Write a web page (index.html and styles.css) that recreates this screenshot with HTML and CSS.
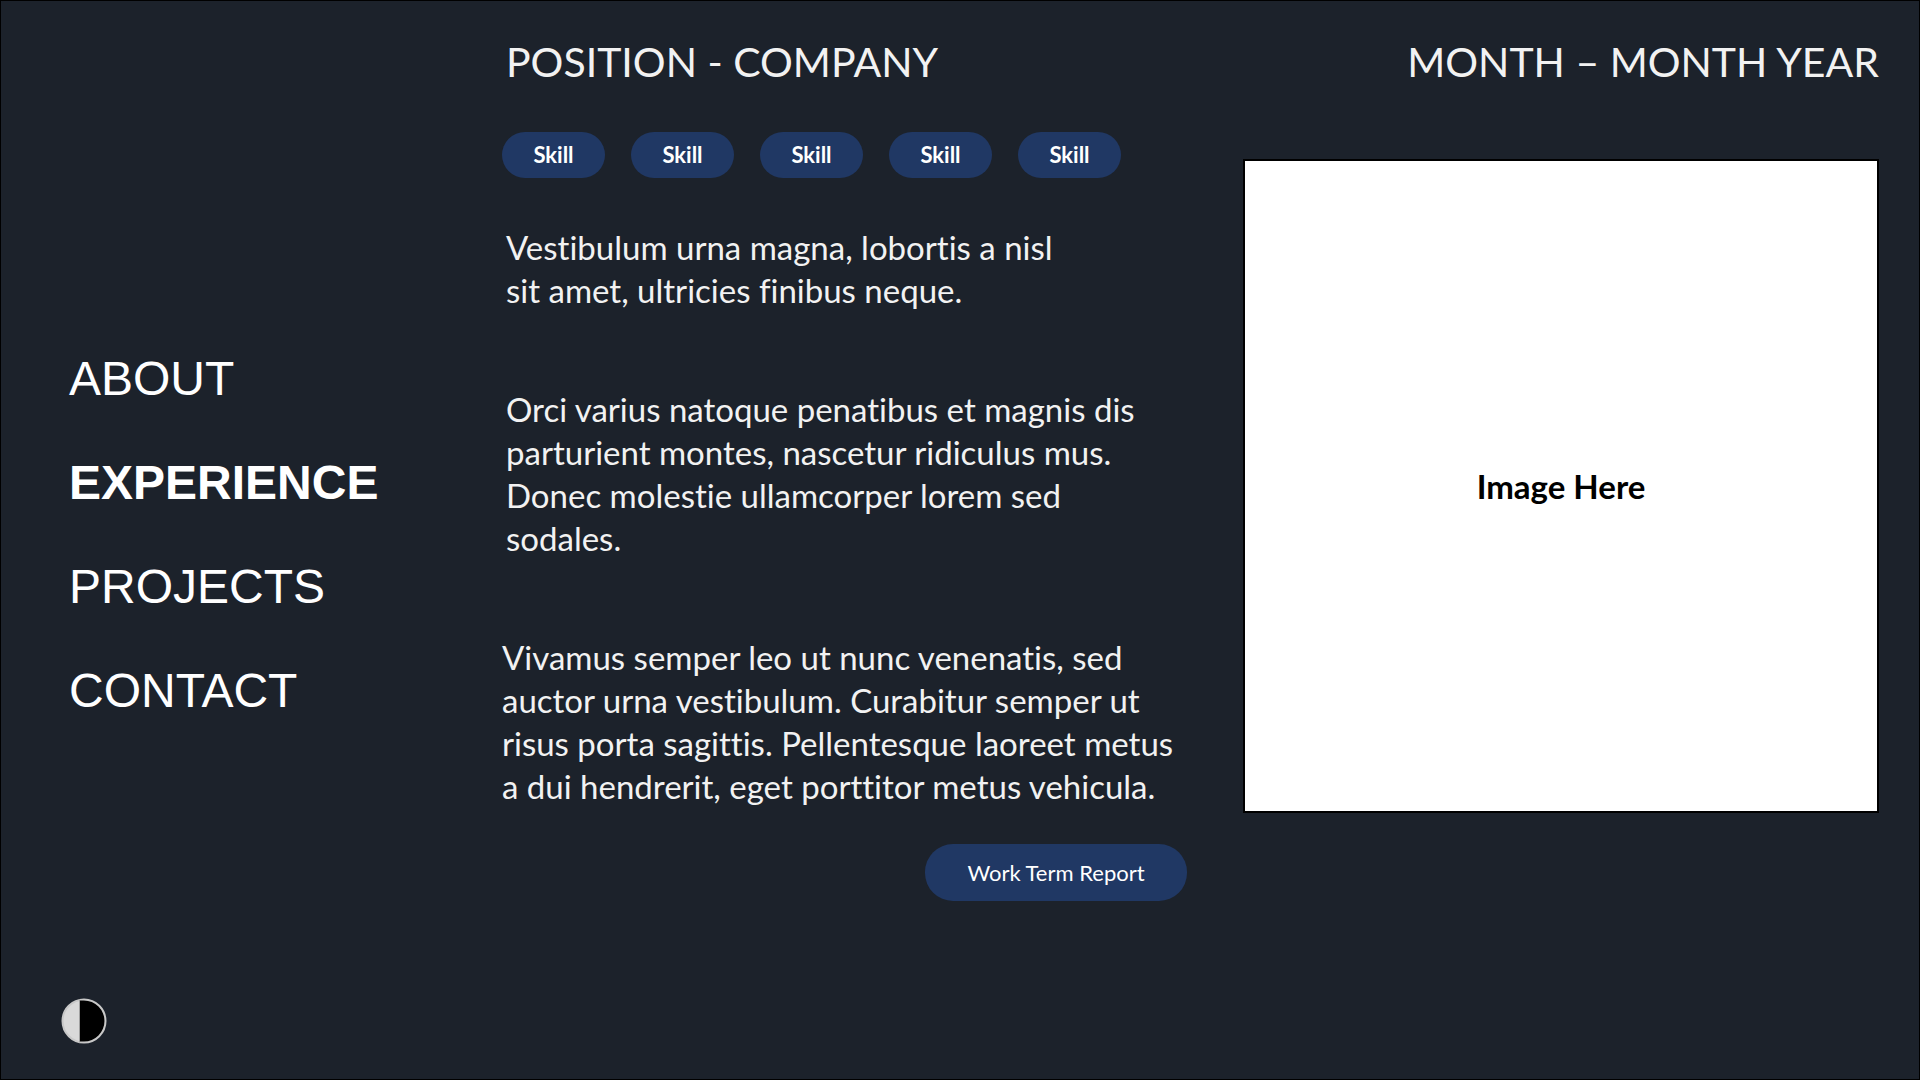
FILE: index.html
```html
<!DOCTYPE html>
<html lang="en">
<head>
  <meta charset="utf-8">
  <meta name="viewport" content="width=device-width, initial-scale=1">
  <title>Experience</title>
  <link rel="stylesheet" href="styles.css">
</head>
<body>
  <div class="page">
    <aside class="sidebar">
      <nav class="nav" aria-label="Main">
        <a class="nav-link" href="#about">ABOUT</a>
        <a class="nav-link nav-link-active" href="#experience" aria-current="page">EXPERIENCE</a>
        <a class="nav-link" href="#projects">PROJECTS</a>
        <a class="nav-link" href="#contact">CONTACT</a>
      </nav>
      <button class="theme-toggle" type="button" aria-label="Toggle contrast">
        <svg viewBox="0 0 46 46" width="46" height="46" aria-hidden="true">
          <circle cx="23" cy="23" r="21.500" fill="#d9d9d9" stroke="#c8c8c8" stroke-width="2"/>
          <path d="M19 2.5H23A20.5 20.5 0 0 1 23 43.500H19Z" fill="#000"/>
          <path d="M18.500 1.500V44.500" stroke="#a0a0a0" stroke-width="1"/>
        </svg>
      </button>
    </aside>
    <main class="main">
      <header class="heading">
        <h1 class="title">POSITION - COMPANY</h1>
        <p class="title">MONTH – MONTH YEAR</p>
      </header>
      <div class="columns">
        <section class="details">
          <ul class="skills">
            <li class="skill">Skill</li>
            <li class="skill">Skill</li>
            <li class="skill">Skill</li>
            <li class="skill">Skill</li>
            <li class="skill">Skill</li>
          </ul>
          <div class="story">
            <p class="text text-short">Vestibulum urna magna, lobortis a nisl sit amet, ultricies finibus neque.</p>
            <p class="text text-inset">Orci varius natoque penatibus et magnis dis parturient montes, nascetur ridiculus mus. Donec molestie ullamcorper lorem sed sodales.</p>
            <p class="text">Vivamus semper leo ut nunc venenatis, sed auctor urna vestibulum. Curabitur semper ut risus porta sagittis. Pellentesque laoreet metus a dui hendrerit, eget porttitor metus vehicula.</p>
          </div>
          <button class="report" type="button">Work Term Report</button>
        </section>
        <div class="picture">Image Here</div>
      </div>
    </main>
  </div>
</body>
</html>
```
FILE: styles.css
```css
* {
  box-sizing: border-box;
  margin: 0;
  padding: 0;
}

body {
  background: #1c222b;
  color: #f2f2f2;
  font-family: Lato, "Open Sans", sans-serif;
  font-variant-ligatures: none;
}

.page {
  display: grid;
  grid-template-columns: 433px 1fr;
  min-height: 100vh;
  padding-right: 40px;
  padding-left: 68px;
  border: 1px solid #000;
}

.sidebar {
  display: flex;
  flex-direction: column;
  justify-content: space-between;
  padding: 326px 0 35px;
}

.nav {
  display: flex;
  flex-direction: column;
  align-items: flex-start;
}

.nav-link {
  color: #fff;
  font-family: "Liberation Sans", Arial, sans-serif;
  font-size: 48px;
  line-height: 104px;
  text-decoration: none;
}

.nav-link-active {
  font-weight: 700;
}

.theme-toggle {
  width: 46px;
  height: 46px;
  margin-left: -8px;
  border: 0;
  background: none;
  cursor: pointer;
}

.theme-toggle svg {
  display: block;
}

.heading {
  display: flex;
  justify-content: space-between;
  padding: 35px 0 41px 4px;
}

.title {
  font-size: 41px;
  font-weight: 400;
  line-height: 52px;
}

.columns {
  display: grid;
  grid-template-columns: 685fr 636fr;
  gap: 56px;
  align-items: start;
  padding-top: 3px;
}

.details {
  display: flex;
  flex-direction: column;
}

.skills {
  display: flex;
  gap: 26px;
  list-style: none;
}

.skill {
  width: 103px;
  border-radius: 23px;
  background: #203864;
  color: #fff;
  font-size: 22px;
  font-weight: 700;
  line-height: 46px;
  text-align: center;
}

.story {
  display: grid;
  gap: 76px;
  padding: 48px 0 36px;
}

.text {
  font-size: 33px;
  line-height: 43px;
}

.text-short,
.text-inset {
  padding-left: 4px;
}

.text-short {
  max-width: 580px;
}

.text-inset {
  max-width: 660px;
}

.report {
  align-self: flex-end;
  width: 262px;
  border: 0;
  border-radius: 28px;
  background: #203864;
  color: #fff;
  font-family: inherit;
  font-size: 22px;
  line-height: 57px;
  cursor: pointer;
}

.picture {
  display: grid;
  place-items: center;
  height: 654px;
  margin-top: 27px;
  border: 2px solid #000;
  background: #fff;
  color: #000;
  font-size: 33px;
  font-weight: 700;
}
```
